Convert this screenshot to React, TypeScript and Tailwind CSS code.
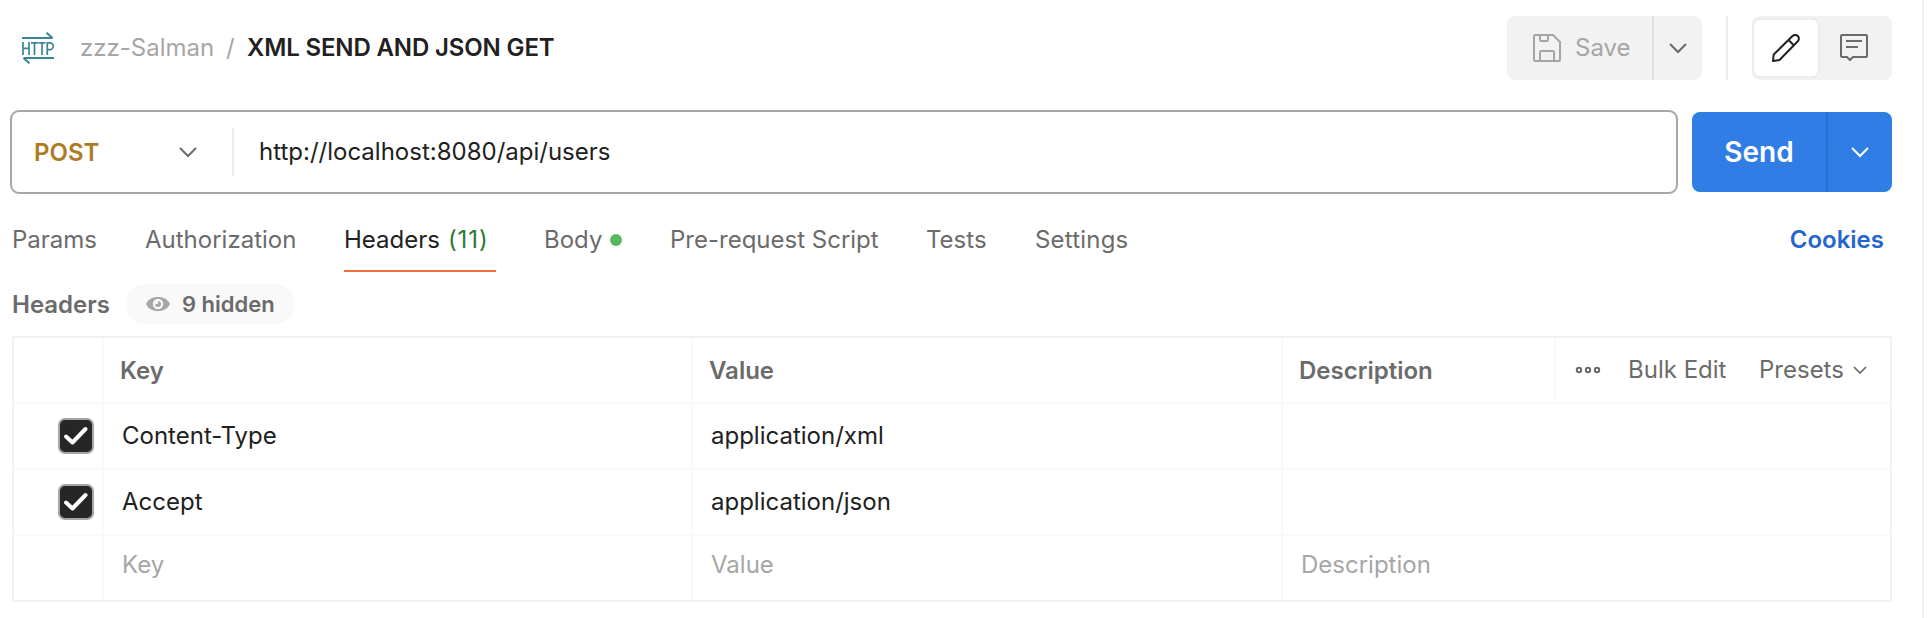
import React from "react";

const HttpIcon = () => (
  <svg width="32" height="32" viewBox="0 0 32 32" fill="none" stroke="#3b8396" strokeWidth="2">
    <path d="M0 6h30.500M24.500 .700l6 5.300M32 26H1.500M7.500 31.300l-6-5.300" />
    <path d="M1 10v13M7 10v13M1 16.300h6M9 10.800h7M12.500 10.800V23M16.500 10.800h7M20 10.800V23M25.300 23V10.800h2.500a3.400 3.400 0 0 1 0 6.800h-2.500" strokeWidth="1.700" />
  </svg>
);

const Chevron = ({ className, small = false }: { className: string; small?: boolean }) =>
  small ? (
    <svg className={className} width="14" height="9" viewBox="0 0 14 9" fill="none" stroke="currentColor" strokeWidth="1.700">
      <path d="M1 1l6 6 6-6" />
    </svg>
  ) : (
    <svg className={className} width="18" height="11" viewBox="0 0 18 11" fill="none" stroke="currentColor" strokeWidth="2">
      <path d="M1 1l8 8 8-8" />
    </svg>
  );

const SaveIcon = () => (
  <svg width="28" height="28" viewBox="0 0 28 28" fill="none" stroke="currentColor" strokeWidth="2">
    <path d="M2 1h18l7 7v18a1 1 0 0 1-1 1H2a1 1 0 0 1-1-1V2a1 1 0 0 1 1-1z" />
    <path d="M7 1v5a1 1 0 0 0 1 1h6a1 1 0 0 0 1-1V1M7 27v-9a1 1 0 0 1 1-1h12a1 1 0 0 1 1 1v9" />
  </svg>
);

const PencilIcon = () => (
  <svg width="28" height="28" viewBox="0 0 28 28" fill="none" stroke="#212121" strokeWidth="2" strokeLinejoin="round">
    <path d="M1 27l.700-6.500L20.500 2a3.700 3.700 0 0 1 5.300 5.300L7.500 26zM16.500 6l5.300 5.300" />
  </svg>
);

const CommentIcon = () => (
  <svg width="28" height="28" viewBox="0 0 28 28" fill="none" stroke="#6b6b6b" strokeWidth="2">
    <path d="M2 1h24a1 1 0 0 1 1 1v20a1 1 0 0 1-1 1H13L10 26l-3-3H2a1 1 0 0 1-1-1V2a1 1 0 0 1 1-1zM6 7h16M6 13h12" />
  </svg>
);

const EyeIcon = () => (
  <svg width="24" height="14" viewBox="0 0 24 14">
    <path d="M12 0C6.500 0 2 2.500 0 7c2 4.500 6.500 7 12 7s10-2.500 12-7c-2-4.500-6.500-7-12-7z" fill="#a6a6a6" />
    <circle cx="12" cy="7" r="5.200" fill="#f9f9f9" />
    <path d="M12 4A3 3 0 1 1 9 7a2.200 2.200 0 0 0 3-3z" fill="#a6a6a6" />
  </svg>
);

const Checkbox = () => (
  <span className="flex h-9 w-9 items-center justify-center rounded-[7px] border-2 border-[#a6a6a6] bg-[#262626]">
    <svg width="26" height="20" viewBox="0 0 26 20" fill="none" stroke="#fff" strokeWidth="4" strokeLinecap="round" strokeLinejoin="round">
      <path d="M3 10.500L9.500 16.500 22.500 3" />
    </svg>
  </span>
);

const tabs = [
  { label: "Params", cls: "w-[133px]" },
  { label: "Authorization", cls: "w-[199px]" },
  { label: "Headers", cls: "w-[200px]" },
  { label: "Body", cls: "w-[126px]" },
  { label: "Pre-request Script", cls: "w-[256px]" },
  { label: "Tests", cls: "w-[109px]" },
  { label: "Settings", cls: "tracking-[0.2px]" },
];

const rows = [
  { key: "Content-Type", value: "application/xml", description: "", on: true },
  { key: "Accept", value: "application/json", description: "", on: true },
  { key: "Key", value: "Value", description: "Description", on: false },
];

const grid = "grid grid-cols-[88px_589px_590px_1fr]";
const cell = "flex items-center border-l-2 border-[#f9f9f9]";

export default function App() {
  return (
    <div className="flex h-[618px] w-[1928px] overflow-hidden bg-white font-['Inter',sans-serif] text-[24px] leading-8 text-[#212121]">
      <main className="w-[1922px] shrink-0 pl-[10px] pr-[30px] pt-4">
        <header className="flex h-16 items-center">
          <div className="ml-3 mr-[26px] flex">
            <HttpIcon />
          </div>
          <span className="w-[146px] text-[#a6a6a6]">zzz-Salman</span>
          <span className="w-[21px] text-[#a6a6a6]">/</span>
          <h1 className="flex-1 font-semibold tracking-[-0.14px]">XML SEND AND JSON GET</h1>
          <div className="flex h-16 w-[195px] overflow-hidden rounded-lg bg-[#f2f2f2] text-[#a6a6a6]">
            <button className="flex w-[145px] items-center gap-[14px] pl-[26px]">
              <SaveIcon />
              Save
            </button>
            <button className="flex flex-1 items-center justify-center border-l-2 border-[#e1e1e1] text-[#6b6b6b]">
              <Chevron className="" />
            </button>
          </div>
          <div className="ml-6 mr-6 h-16 w-[2px] bg-[#ededed]" />
          <div className="flex h-16 w-[140px] rounded-lg bg-[#f2f2f2]">
            <button className="my-[2px] flex w-[68px] items-center justify-center rounded-lg border-2 border-[#ededed] bg-white">
              <PencilIcon />
            </button>
            <button className="flex flex-1 items-center pl-5">
              <CommentIcon />
            </button>
          </div>
        </header>

        <section className="mt-[30px] flex h-[84px] items-center justify-between">
          <div className="flex h-[84px] w-[1668px] items-center rounded-[9px] border-2 border-[#a6a6a6]">
            <div className="flex h-12 w-[222px] items-center border-r-2 border-[#ededed] pl-[22px] text-[#ad7a25]">
              <span className="w-[145px] pt-[2px] font-semibold">POST</span>
              <Chevron className="text-[#6b6b6b]" />
            </div>
            <span className="pl-[25px]">http://localhost:8080/api/users</span>
          </div>
          <div className="flex h-20 w-[200px] overflow-hidden rounded-lg bg-[#307de6] text-white">
            <button className="w-[134px] text-[28px] font-semibold">Send</button>
            <button className="flex flex-1 items-center justify-center border-l-2 border-[#2b70d0]">
              <Chevron className="" />
            </button>
          </div>
        </section>

        <nav className="mt-[26px] flex h-[52px] pl-[2px] pr-2 text-[#6b6b6b]">
          {tabs.map((t) => (
            <div key={t.label} className={`flex shrink-0 items-start ${t.cls}`}>
              {t.label === "Headers" ? (
                <div className="flex h-[52px] w-[152px] gap-2 whitespace-nowrap border-b-2 border-[#f26b3a] pt-1 text-[#212121]">
                  Headers <span className="tracking-[0.9px] text-[#2b7a34]">(11)</span>
                </div>
              ) : (
                <div className="flex items-center gap-2 whitespace-nowrap pt-1">
                  {t.label}
                  {t.label === "Body" && <span className="h-3 w-3 rounded-full bg-[#58b75f]" />}
                </div>
              )}
            </div>
          ))}
          <a className="ml-auto pt-1 font-semibold text-[#2566cf]">Cookies</a>
        </nav>

        <div className="mt-3 flex h-10 items-center pl-[2px] font-semibold text-[#6b6b6b]">
          <span className="w-[114px] pt-[2px]">Headers</span>
          <span className="flex h-10 w-[169px] items-center gap-3 rounded-full bg-[#f9f9f9] pl-5 text-[22px]">
            <EyeIcon />
            9 hidden
          </span>
        </div>

        <section className="ml-[2px] mt-3 w-[1880px] border-2 border-[#f2f2f2]">
          <div className={`${grid} h-16 font-semibold text-[#6b6b6b]`}>
            <div />
            <div className={`${cell} pl-4 pt-[2px]`}>Key</div>
            <div className={`${cell} pl-4 pt-[2px]`}>Value</div>
            <div className={`${cell} pl-4`}>
              <span className="flex-1 pt-[2px]">Description</span>
              <div className="flex h-full w-[336px] items-center border-l-2 border-[#f9f9f9] pl-[19px] font-normal">
                <svg width="26" height="8" viewBox="0 0 26 8" fill="none" stroke="#6b6b6b" strokeWidth="2">
                  <circle cx="4" cy="4" r="2.200" />
                  <circle cx="13" cy="4" r="2.200" />
                  <circle cx="22" cy="4" r="2.200" />
                </svg>
                <span className="ml-[27px] w-[131px]">Bulk Edit</span>
                <span>Presets</span>
                <Chevron small className="ml-[9px]" />
              </div>
            </div>
          </div>
          {rows.map((r) => (
            <div key={r.key} className={`${grid} h-[66px] border-t-2 border-[#f9f9f9] ${r.on ? "" : "text-[#a6a6a6]"}`}>
              <div className="flex items-center pl-11">{r.on && <Checkbox />}</div>
              {[r.key, r.value, r.description].map((text, i) => (
                <div key={i} className={`${cell} pl-[18px] ${r.on ? "" : "pb-[7px]"}`}>
                  {text}
                </div>
              ))}
            </div>
          ))}
        </section>
      </main>
      <div className="h-full w-[2px] bg-[#f2f2f2]" />
    </div>
  );
}
